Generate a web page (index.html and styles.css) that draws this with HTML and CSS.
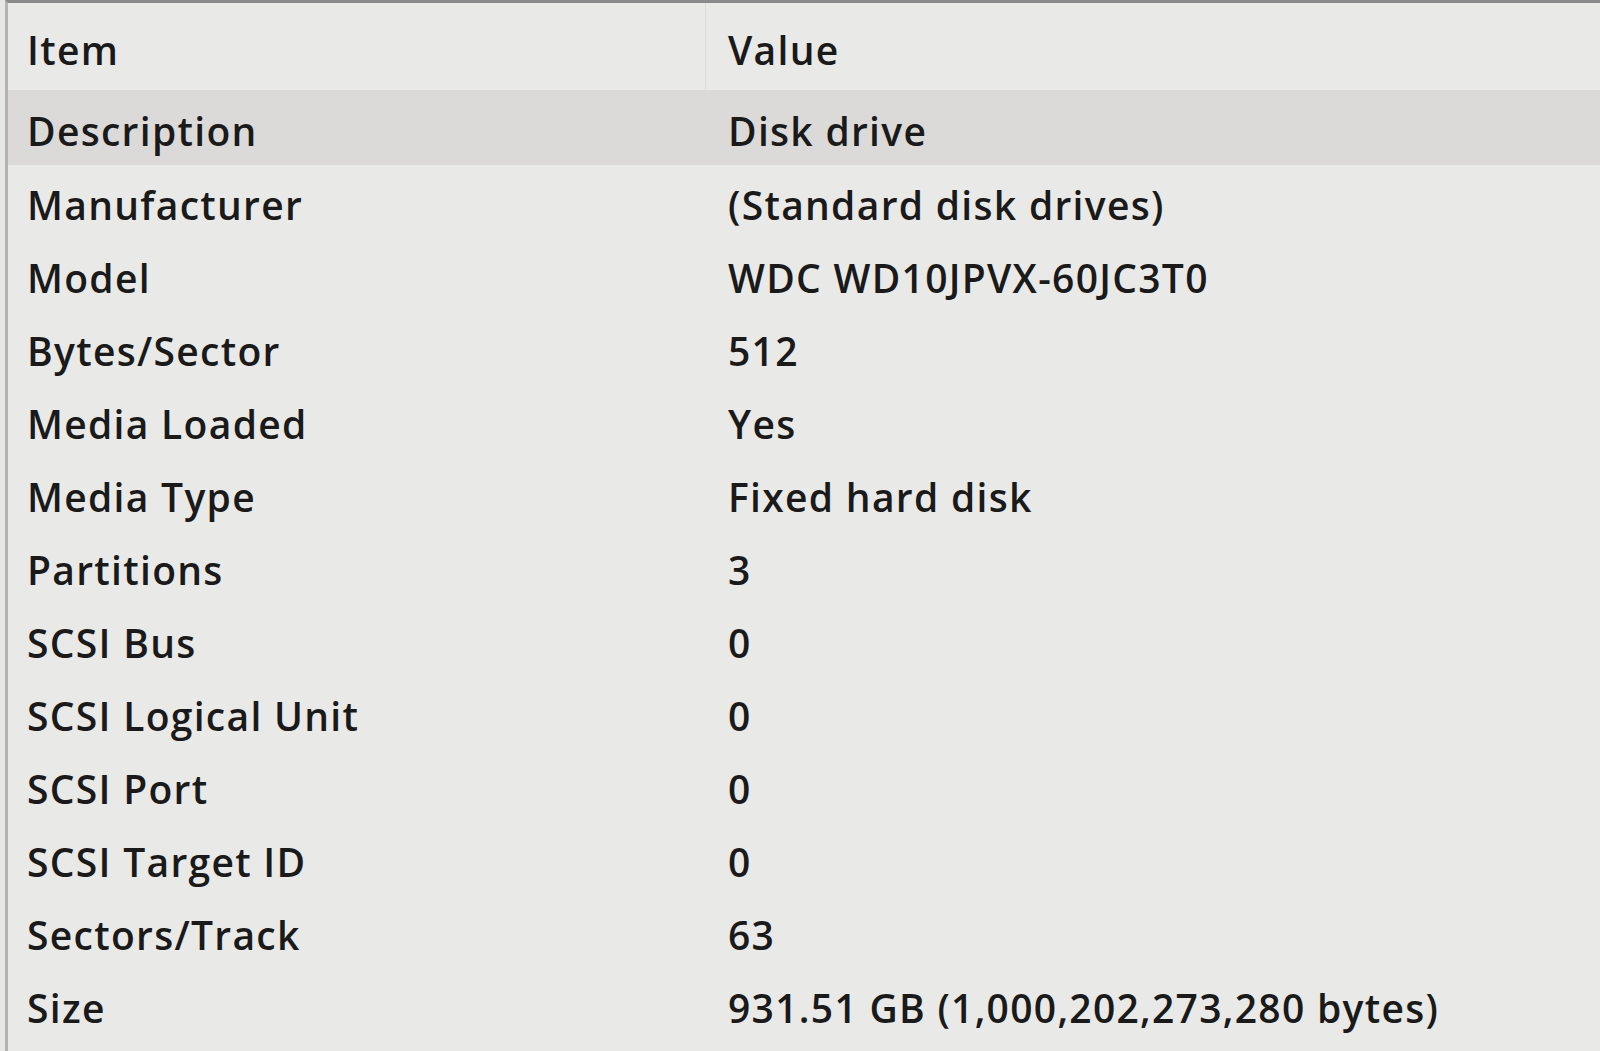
FILE: index.html
```html
<!DOCTYPE html>
<html lang="en">
<head>
<meta charset="utf-8">
<title>System Information - Disk</title>
<link rel="stylesheet" href="styles.css">
</head>
<body>
<div class="list">
  <div class="header">
    <div class="col col-item">Item</div>
    <div class="col col-value">Value</div>
  </div>
  <div class="row selected"><div class="col col-item">Description</div><div class="col col-value">Disk drive</div></div>
  <div class="row"><div class="col col-item">Manufacturer</div><div class="col col-value">(Standard disk drives)</div></div>
  <div class="row"><div class="col col-item">Model</div><div class="col col-value">WDC WD10JPVX-60JC3T0</div></div>
  <div class="row"><div class="col col-item">Bytes/Sector</div><div class="col col-value">512</div></div>
  <div class="row"><div class="col col-item">Media Loaded</div><div class="col col-value">Yes</div></div>
  <div class="row"><div class="col col-item">Media Type</div><div class="col col-value">Fixed hard disk</div></div>
  <div class="row"><div class="col col-item">Partitions</div><div class="col col-value">3</div></div>
  <div class="row"><div class="col col-item">SCSI Bus</div><div class="col col-value">0</div></div>
  <div class="row"><div class="col col-item">SCSI Logical Unit</div><div class="col col-value">0</div></div>
  <div class="row"><div class="col col-item">SCSI Port</div><div class="col col-value">0</div></div>
  <div class="row"><div class="col col-item">SCSI Target ID</div><div class="col col-value">0</div></div>
  <div class="row"><div class="col col-item">Sectors/Track</div><div class="col col-value">63</div></div>
  <div class="row"><div class="col col-item">Size</div><div class="col col-value">931.51 GB (1,000,202,273,280 bytes)</div></div>
</div>
</body>
</html>
```
FILE: styles.css
```css
html, body {
  margin: 0;
  padding: 0;
  width: 1600px;
  height: 1051px;
  overflow: hidden;
  background: #e7e7e5;
}
.list {
  height: 1051px;
  box-sizing: border-box;
  border-top: 3px solid #8a8a8a;
  border-left: 3px solid #b4b4b2;
  margin-left: 5px;
  font-family: "Open Sans", "Segoe UI", sans-serif;
  font-size: 39px;
  font-weight: 600;
  color: #1a1a1a;
  letter-spacing: 1.3px;
  background: #e9e9e7;
}
.header {
  display: flex;
  height: 87px;
  padding-top: 5px;
  box-sizing: border-box;
}
.header .col {
  display: flex;
  align-items: center;
}
.header .col-item {
  border-right: 1px solid #dcdcdb;
  margin-top: -5px;
  padding-top: 5px;
}
.row {
  display: flex;
  height: 73px;
  align-items: center;
  padding-top: 5px;
  box-sizing: border-box;
}
.row.selected {
  background: #dcdad9;
  height: 75px;
}
.col-item {
  width: 698px;
  padding-left: 19px;
  box-sizing: border-box;
  flex: none;
}
.col-value {
  padding-left: 22px;
}
```
